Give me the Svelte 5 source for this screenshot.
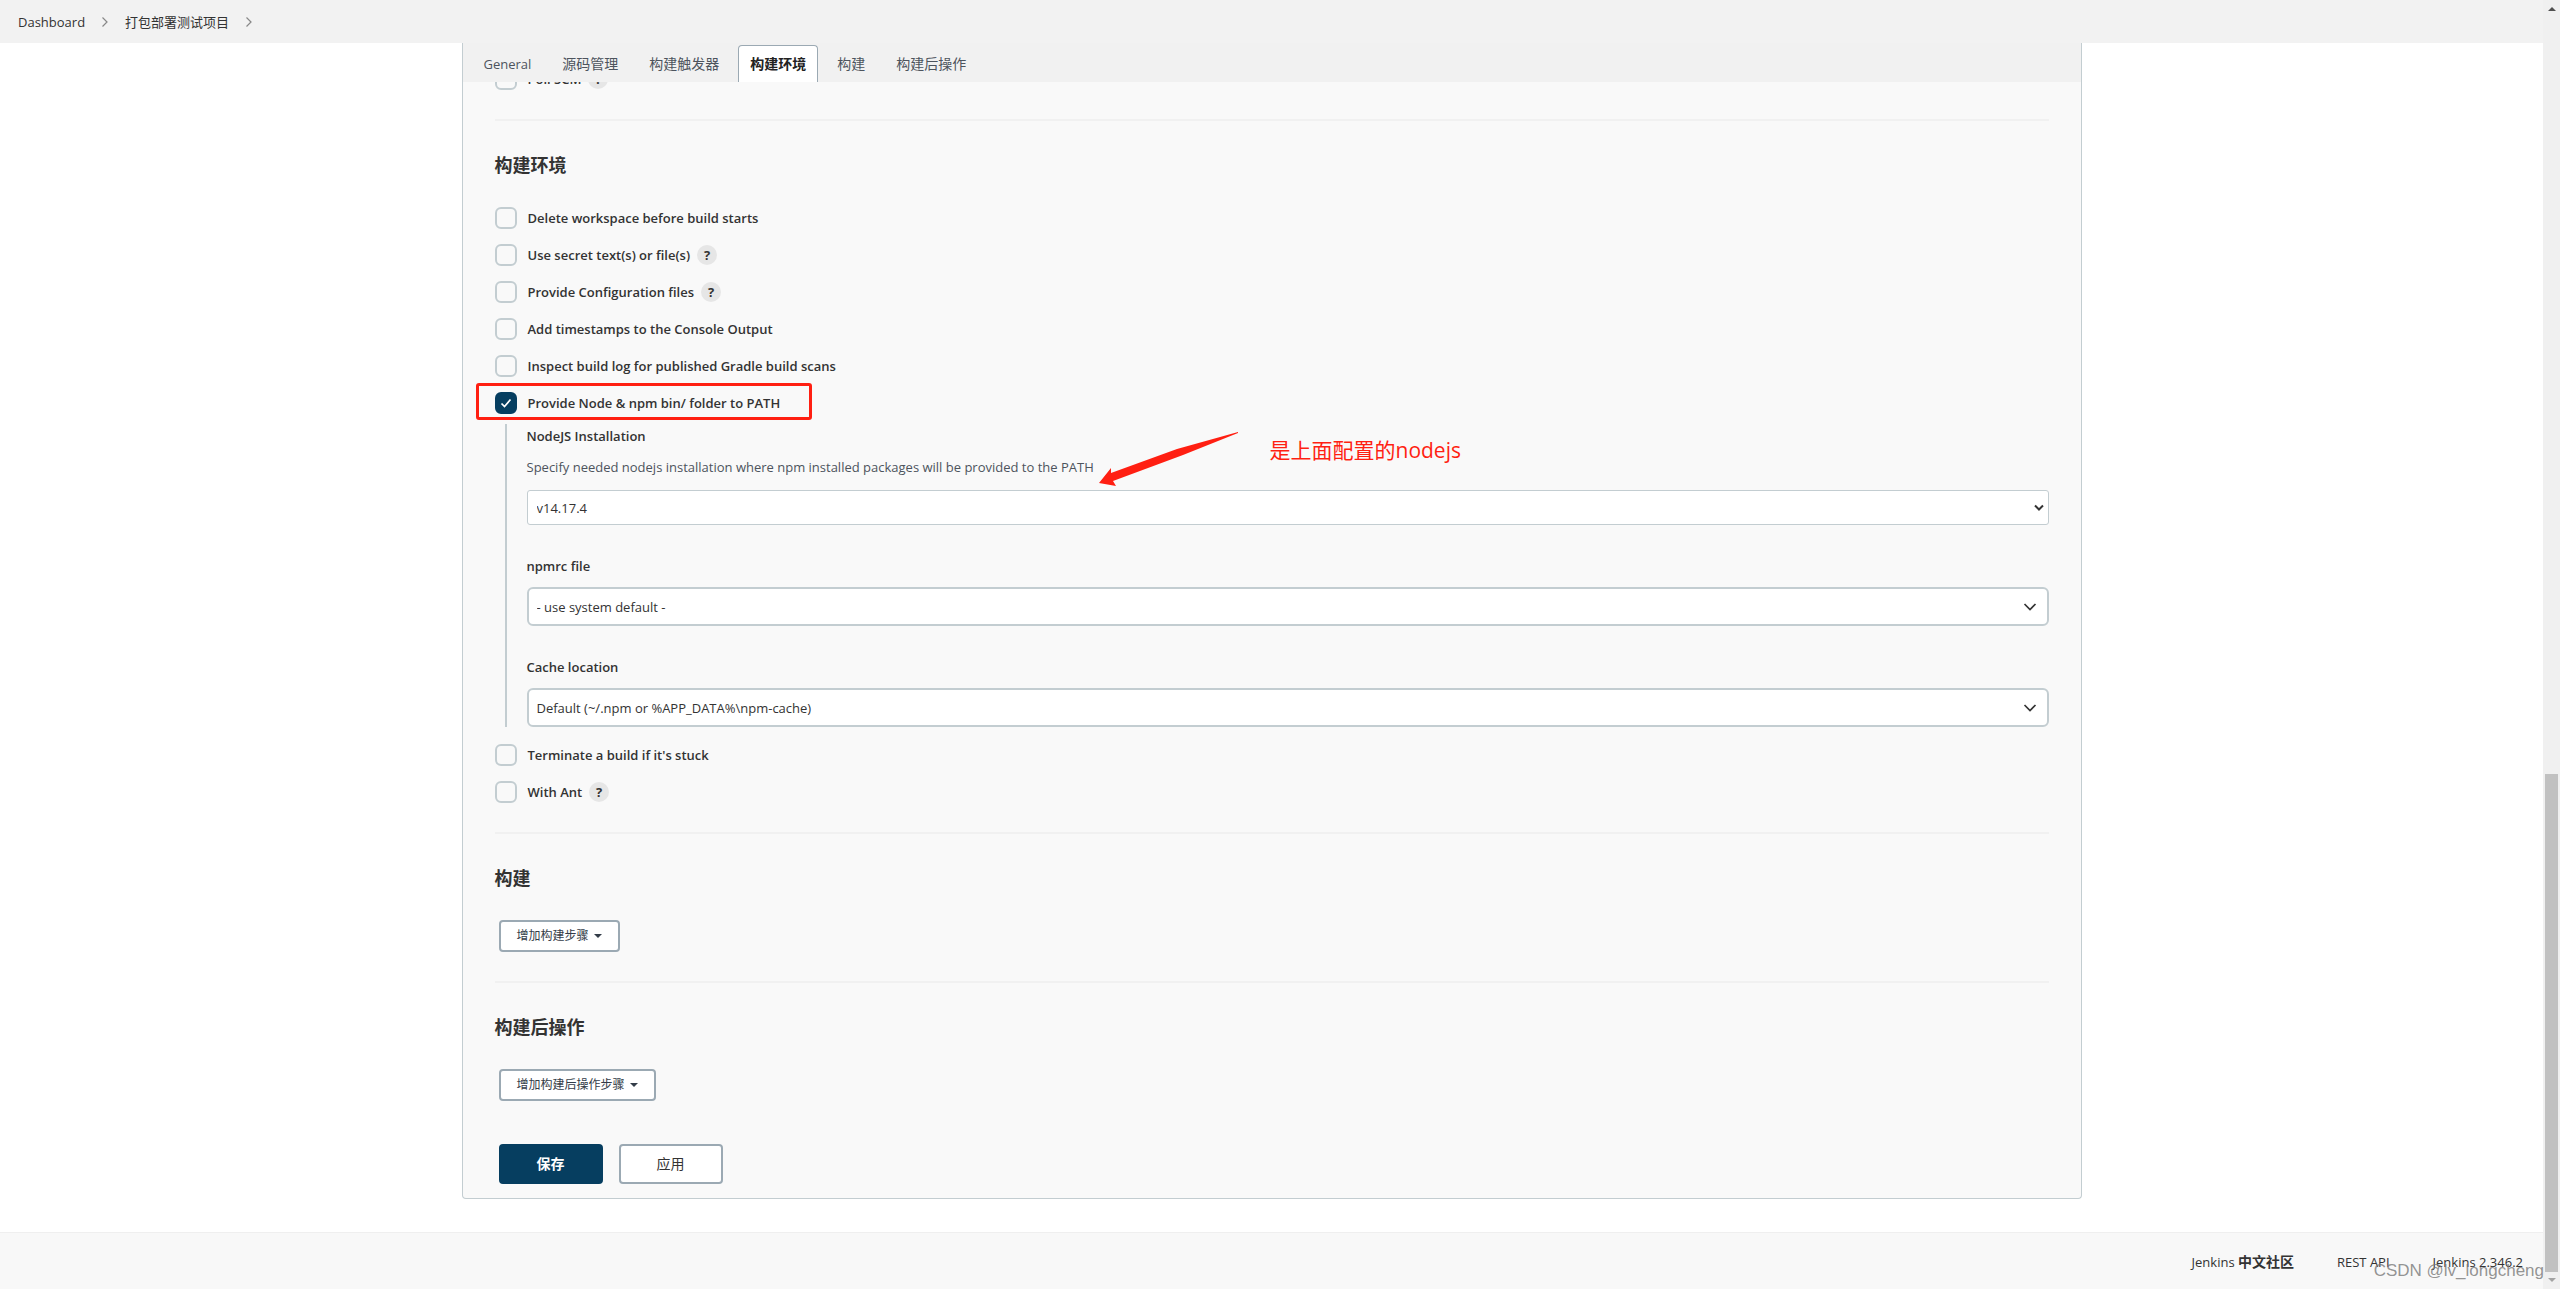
<script>
let tabs = [
    { name: 'General', latin: true },
    { name: '源码管理' },
    { name: '构建触发器' },
    { name: '构建环境', active: true },
    { name: '构建' },
    { name: '构建后操作' }
];

let options = [
    { id: 'cleanup', label: 'Delete workspace before build starts' },
    { id: 'secrets', label: 'Use secret text(s) or file(s)', help: true },
    { id: 'configs', label: 'Provide Configuration files', help: true },
    { id: 'timestamps', label: 'Add timestamps to the Console Output' },
    { id: 'gradle', label: 'Inspect build log for published Gradle build scans' },
    { id: 'node', label: 'Provide Node & npm bin/ folder to PATH', checked: true, marked: true }
];

let moreOptions = [
    { id: 'timeout', label: "Terminate a build if it's stuck" },
    { id: 'ant', label: 'With Ant', help: true }
];
</script>

{#snippet chevron()}
    <svg class="chevron" viewBox="0 0 8 12" width="8" height="12" aria-hidden="true">
        <path d="M1.5 1.5 L6 6 L1.5 10.5" fill="none" stroke="currentColor" stroke-width="1.2" />
    </svg>
{/snippet}

{#snippet option(item)}
    <div class="option">
        <input type="checkbox" id={item.id} checked={item.checked} />
        <label for={item.id}>{item.label}</label>
        {#if item.help}
            <button class="help" type="button">?</button>
        {/if}
        {#if item.marked}
            <span class="mark"></span>
        {/if}
    </div>
{/snippet}

<div class="page">
    <div class="content">
        <nav class="breadcrumbs">
            <a href="#dashboard" class="home">Dashboard</a>
            {@render chevron()}
            <a href="#project">打包部署测试项目</a>
            {@render chevron()}
        </nav>

        <main class="panel">
            <div class="tabs">
                {#each tabs as tab}
                    <a href="#tab" class="tab" class:active={tab.active} class:latin={tab.latin}>{tab.name}</a>
                {/each}
            </div>

            <form class="config">
                <div class="scrolled">
                    {@render option({ id: 'poll', label: 'Poll SCM', help: true })}
                </div>

                <section>
                    <h2>构建环境</h2>
                    <div class="options">
                        {#each options as item}
                            {@render option(item)}
                        {/each}
                    </div>

                    <div class="nested">
                        <div class="field">
                            <label for="nodejs">NodeJS Installation</label>
                            <p>Specify needed nodejs installation where npm installed packages will be provided to the PATH</p>
                            <div class="select small">
                                <select id="nodejs"><option>v14.17.4</option></select>
                                <svg viewBox="0 0 10 8" width="10" height="8" aria-hidden="true">
                                    <path d="M1 1.5 L5 5.5 L9 1.5" fill="none" stroke="currentColor" stroke-width="2" />
                                </svg>
                            </div>
                        </div>
                        <div class="field">
                            <label for="npmrc">npmrc file</label>
                            <div class="select">
                                <select id="npmrc"><option>- use system default -</option></select>
                                <svg viewBox="0 0 14 8" width="14" height="8" aria-hidden="true">
                                    <path d="M1.5 1 L7 6.5 L12.5 1" fill="none" stroke="currentColor" stroke-width="1.7" />
                                </svg>
                            </div>
                        </div>
                        <div class="field">
                            <label for="cache">Cache location</label>
                            <div class="select">
                                <select id="cache"><option>Default (~/.npm or %APP_DATA%\npm-cache)</option></select>
                                <svg viewBox="0 0 14 8" width="14" height="8" aria-hidden="true">
                                    <path d="M1.5 1 L7 6.5 L12.5 1" fill="none" stroke="currentColor" stroke-width="1.7" />
                                </svg>
                            </div>
                        </div>

                        <div class="note">
                            <svg viewBox="0 0 140 56" width="140" height="56" aria-hidden="true">
                                <path d="M139 0 L78 17 L12 41 L12 36 L0 51 L17 54 L14 49 L84 23 L139 1 Z" fill="#ff1f12" />
                            </svg>
                            <span>是上面配置的nodejs</span>
                        </div>
                    </div>

                    <div class="options">
                        {#each moreOptions as item}
                            {@render option(item)}
                        {/each}
                    </div>
                </section>

                <section>
                    <h2>构建</h2>
                    <button class="step" type="button">增加构建步骤 <span class="caret"></span></button>
                </section>

                <section>
                    <h2>构建后操作</h2>
                    <button class="step" type="button">增加构建后操作步骤 <span class="caret"></span></button>
                </section>

                <div class="actions">
                    <button class="primary" type="button">保存</button>
                    <button type="button">应用</button>
                </div>
            </form>
        </main>

        <footer>
            <a href="#community">Jenkins <b>中文社区</b></a>
            <a href="#api">REST API</a>
            <a href="#version">Jenkins 2.346.2</a>
            <span class="watermark">CSDN @lv_longcheng</span>
        </footer>
    </div>

    <div class="scrollbar" aria-hidden="true">
        <span class="arrow up"></span>
        <span class="thumb"></span>
        <span class="arrow down"></span>
    </div>
</div>

<style>
:global(body) {
    background: #fff;
}

.page {
    display: flex;
    min-height: 100vh;
    font-family: "Open Sans", "Noto Sans CJK SC", sans-serif;
    font-size: 13px;
    line-height: 20px;
    color: #333;
}

.page * {
    box-sizing: border-box;
}

.content {
    flex: 1;
    display: flex;
    flex-direction: column;
    min-width: 0;
}

a {
    color: inherit;
    text-decoration: none;
}

button,
select {
    font: inherit;
    color: inherit;
}

.breadcrumbs {
    display: flex;
    align-items: center;
    gap: 16px;
    height: 43px;
    padding: 0 18px;
    background: #f2f2f2;
}

.breadcrumbs .home {
    font-weight: 500;
}

.chevron {
    color: #888;
}

.panel {
    width: 100%;
    max-width: 1620px;
    margin: 0 auto 32px;
    background: #f9f9f9;
    border: 1px solid #c3cdd1;
    border-top: 0;
    border-radius: 0 0 4px 4px;
}

.tabs {
    display: flex;
    align-items: flex-end;
    gap: 7px;
    height: 39px;
    padding: 0 9px;
    background: #f1f1f1;
}

.tab {
    height: 37px;
    padding: 0 11px;
    border: 1px solid transparent;
    border-bottom: 0;
    border-radius: 4px 4px 0 0;
    font-size: 14px;
    line-height: 36px;
    color: #4d545d;
}

.tab.latin {
    font-size: 13px;
}

.tab.active {
    background: #fff;
    border-color: #9ba9b3;
    color: #222;
    font-weight: 700;
}

.config {
    padding: 0 32px 14px;
}

/* row scrolled halfway under the tab bar */
.scrolled {
    display: flex;
    align-items: flex-end;
    height: 8px;
    margin-bottom: 29px;
    overflow: hidden;
}

section {
    padding: 34px 0 29px;
    border-top: 2px solid #f1f1f1;
}

h2 {
    margin: 0 0 32px;
    font-size: 18px;
    line-height: 20px;
    font-weight: 700;
}

.options {
    display: flex;
    flex-direction: column;
    gap: 15px;
}

.option {
    position: relative;
    display: flex;
    align-items: center;
    height: 22px;
}

.option label {
    margin-left: 11px;
    font-weight: 600;
}

.option input {
    appearance: none;
    width: 22px;
    height: 22px;
    margin: 0;
    border: 2px solid #c3cdd1;
    border-radius: 6px;
}

.option input:checked {
    border-color: #063e60;
    background: #063e60 url("data:image/svg+xml,%3Csvg xmlns='http://www.w3.org/2000/svg' viewBox='0 0 18 18'%3E%3Cpath d='M4.5 9.5l3 3 6-7' fill='none' stroke='white' stroke-width='1.7'/%3E%3C/svg%3E") center / 18px no-repeat;
}

.help {
    width: 20px;
    height: 20px;
    margin-left: 7px;
    padding: 0;
    border: 0;
    border-radius: 50%;
    background: #e6e6e6;
    font-weight: 700;
}

.mark {
    position: absolute;
    left: -19px;
    top: -9px;
    width: 336px;
    height: 37px;
    border: 3px solid #ff1f12;
    border-radius: 3px;
    pointer-events: none;
}

.nested {
    position: relative;
    display: flex;
    flex-direction: column;
    gap: 29px;
    margin: 10px 0 17px 10px;
    padding-left: 20px;
    border-left: 2px solid #c3cdd1;
}

.field label {
    display: block;
    margin: 2px 0 11px;
    font-weight: 600;
}

.field p {
    margin: 0 0 13px;
    color: #4d545d;
}

.select {
    position: relative;
    display: flex;
    align-items: center;
}

.select select {
    appearance: none;
    width: 100%;
    height: 39px;
    padding: 0 8px;
    border: 2px solid #c3cdd1;
    border-radius: 6px;
    background: #fff;
}

.select svg {
    position: absolute;
    right: 12px;
    pointer-events: none;
}

.select.small select {
    height: 35px;
    padding: 0 9px;
    border-width: 1px;
    border-radius: 3px;
}

.select.small svg {
    right: 5px;
}

/* hand-drawn arrow with its remark, lies over the form */
.note {
    position: absolute;
    left: 592px;
    top: 8px;
    display: flex;
    align-items: flex-start;
    gap: 31px;
    font-size: 21px;
    line-height: 36px;
    color: #ff1f12;
    pointer-events: none;
}

.step {
    display: flex;
    align-items: center;
    gap: 5px;
    height: 32px;
    margin-left: 4px;
    padding: 0 16px;
    border: 2px solid #9ba9b3;
    border-radius: 4px;
    background: #fff;
    font-size: 12px;
    color: #333c48;
}

.caret {
    border: 4px solid transparent;
    border-top-color: currentColor;
    border-bottom: 0;
}

.actions {
    display: flex;
    gap: 16px;
    padding: 14px 4px 0;
}

.actions button {
    width: 104px;
    height: 40px;
    border: 2px solid #9ba9b3;
    border-radius: 4px;
    background: #fff;
    font-size: 14px;
}

.actions .primary {
    border-color: #063e60;
    background: #063e60;
    color: #fff;
    font-weight: 700;
}

footer {
    position: relative;
    display: flex;
    justify-content: flex-end;
    align-items: center;
    gap: 43px;
    height: 57px;
    margin-top: auto;
    padding: 2px 20px 0;
    border-top: 1px solid #efefef;
    background: #f8f8f8;
    font-weight: 500;
}

footer b {
    font-size: 14px;
}

.watermark {
    position: absolute;
    right: -1px;
    bottom: 8px;
    font-family: "Liberation Sans", sans-serif;
    font-size: 17px;
    font-weight: 400;
    color: rgba(120, 120, 120, 0.8);
    white-space: nowrap;
}

.scrollbar {
    display: flex;
    flex-direction: column;
    align-items: center;
    width: 17px;
    padding: 7px 0;
    background: #f0f0f0;
}

.thumb {
    width: 13px;
    height: 498px;
    margin: auto 0 6px;
    background: #c1c1c1;
}

.arrow {
    border: 4px solid transparent;
}

.arrow.up {
    border-top: 0;
    border-bottom-color: #505050;
}

.arrow.down {
    border-bottom: 0;
    border-top-color: #a3a3a3;
}
</style>
